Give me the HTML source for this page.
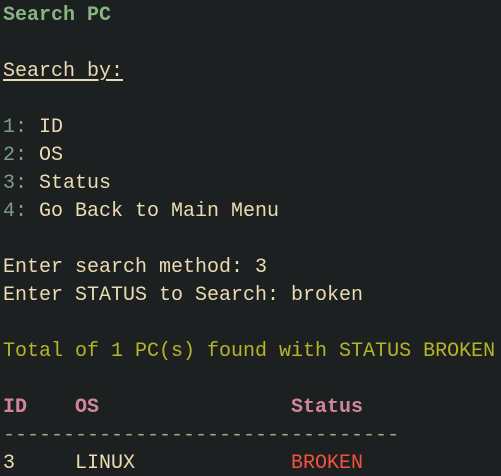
<!DOCTYPE html>
<html><head><style>
html,body{margin:0;padding:0;background:#1d2021;width:501px;height:476px;overflow:hidden}
pre{margin:0;padding:0 0 0 3px;position:relative;top:2px;font-family:"Liberation Mono",monospace;font-size:20px;line-height:28px;color:#ebdbb2;white-space:pre}
.g{color:#89b482;font-weight:bold}
.u{text-decoration:underline;text-underline-offset:3px}
.n{color:#7c9c8c}
.y{color:#b5b52a}
.p{color:#d3869b;font-weight:bold}
.d{color:#89b482}
.r{color:#f2533d}
</style></head><body><pre><span class="g">Search PC</span>

<span class="u">Search by:</span>

<span class="n">1:</span> ID
<span class="n">2:</span> OS
<span class="n">3:</span> Status
<span class="n">4:</span> Go Back to Main Menu

Enter search method: 3
Enter STATUS to Search: broken

<span class="y">Total of 1 PC(s) found with STATUS BROKEN</span>

<span class="p">ID    OS                Status</span>
<span class="d">---------------------------------</span>
3     LINUX             <span class="r">BROKEN</span>
</pre></body></html>
